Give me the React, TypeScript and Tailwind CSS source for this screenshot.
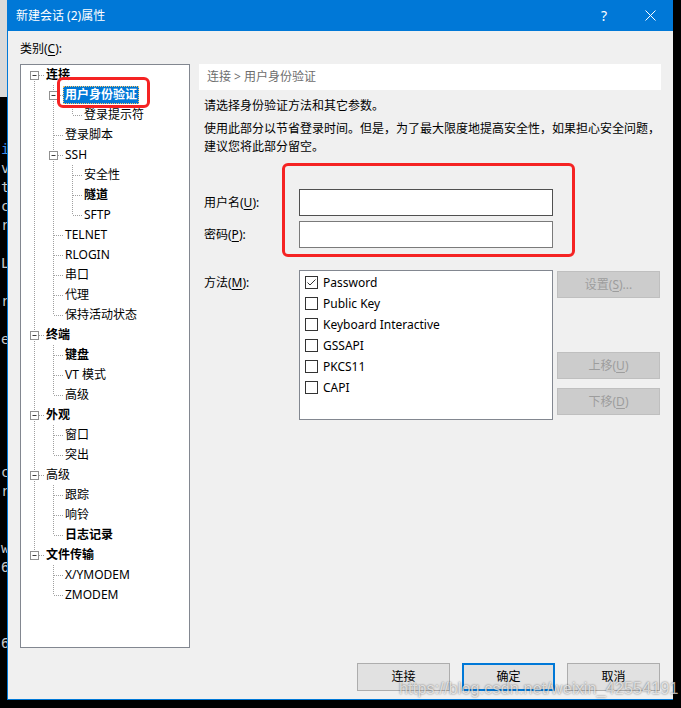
import React from 'react'

type TreeNode = { t: string; b?: boolean; sel?: boolean; c?: TreeNode[] }
type Row = { node: TreeNode; trail: boolean[]; last: boolean; first: boolean }

const tree: TreeNode[] = [
  {
    t: '连接',
    b: true,
    c: [
      { t: '用户身份验证', b: true, sel: true, c: [{ t: '登录提示符' }] },
      { t: '登录脚本' },
      { t: 'SSH', c: [{ t: '安全性' }, { t: '隧道', b: true }, { t: 'SFTP' }] },
      { t: 'TELNET' },
      { t: 'RLOGIN' },
      { t: '串口' },
      { t: '代理' },
      { t: '保持活动状态' },
    ],
  },
  { t: '终端', b: true, c: [{ t: '键盘', b: true }, { t: 'VT 模式' }, { t: '高级' }] },
  { t: '外观', b: true, c: [{ t: '窗口' }, { t: '突出' }] },
  { t: '高级', c: [{ t: '跟踪' }, { t: '响铃' }, { t: '日志记录', b: true }] },
  { t: '文件传输', b: true, c: [{ t: 'X/YMODEM' }, { t: 'ZMODEM' }] },
]

const flatten = (nodes: TreeNode[], trail: boolean[], out: Row[]) => {
  nodes.forEach((n, i) => {
    const last = i === nodes.length - 1
    out.push({ node: n, trail, last, first: trail.length === 0 && i === 0 })
    if (n.c) flatten(n.c, [...trail, !last], out)
  })
  return out
}

const rows = flatten(tree, [], [])

// left edge of the terminal window behind the dialog, one char per line
const termLines = [
  'i', 'v', 't', 'c', 'r', '', 'L', '', 'r', '', 'e', '', '', '', '', '', '', 'c', 'r', '', '', 'w', '6', '', '', '', '6',
]

const DOT = '#a0a0a0'

function Connector({ row }: { row: Row }) {
  return (
    <svg width="19" height="20" className="shrink-0">
      {!row.first && <line x1="9.5" y1="0" x2="9.5" y2="10" stroke={DOT} strokeDasharray="1 1" />}
      {!row.last && <line x1="9.5" y1="10" x2="9.5" y2="20" stroke={DOT} strokeDasharray="1 1" />}
      <line x1="10" y1="10.5" x2="19" y2="10.5" stroke={DOT} strokeDasharray="1 1" />
      {row.node.c && (
        <g>
          <rect x="5.5" y="6.5" width="8" height="8" fill="#fff" stroke="#919191" />
          <line x1="7.5" y1="10.5" x2="11.5" y2="10.5" stroke="#3c3c3c" />
        </g>
      )}
    </svg>
  )
}

function TreeRow({ row }: { row: Row }) {
  const { node } = row
  return (
    <div className="flex h-[20px] items-center">
      {row.trail.map((cont, i) => (
        <svg key={i} width="19" height="20" className="shrink-0">
          {cont && <line x1="9.5" y1="0" x2="9.5" y2="20" stroke={DOT} strokeDasharray="1 1" />}
        </svg>
      ))}
      <Connector row={row} />
      <span
        className={
          'whitespace-nowrap px-[2px] text-[12px] leading-[18px] ' +
          (node.b ? 'font-bold ' : '') +
          (node.sel ? 'bg-[#0078d7] text-white outline-1 outline-dotted outline-offset-[-1px] outline-[#f4c66b]' : 'text-black')
        }
      >
        {node.t}
      </span>
    </div>
  )
}

function Mn({ children }: { children: React.ReactNode }) {
  return <span className="underline underline-offset-2">{children}</span>
}

function Check({ on }: { on?: boolean }) {
  return (
    <svg width="13" height="13" className="shrink-0">
      <rect x="0.5" y="0.5" width="12" height="12" fill="#fff" stroke="#333" />
      {on && <polyline points="2.5,6.5 5,9 10.5,3.5" fill="none" stroke="#333" strokeWidth="1" />}
    </svg>
  )
}

function SideButton({ children }: { children: React.ReactNode }) {
  return (
    <div className="flex h-[27px] w-[103px] items-center justify-center border border-[#bfbfbf] bg-[#cccccc] text-[12px] text-[#9d9d9d]">
      {children}
    </div>
  )
}

function DialogButton({ children, primary }: { children: React.ReactNode; primary?: boolean }) {
  return (
    <div
      className={
        'flex h-[28px] w-[93px] items-center justify-center bg-[#e1e1e1] text-[12px] text-black ' +
        (primary ? 'border-2 border-[#0078d7]' : 'border border-[#adadad]')
      }
    >
      {children}
    </div>
  )
}

export default function App() {
  const methods = ['Password', 'Public Key', 'Keyboard Interactive', 'GSSAPI', 'PKCS11', 'CAPI']

  return (
    <div className="relative flex h-[708px] w-[681px] overflow-hidden bg-black font-['Noto_Sans','Noto_Sans_CJK_SC',sans-serif]">
      {/* window behind */}
      <div className="flex w-[7px] shrink-0 flex-col overflow-hidden">
        <div className="h-[97px] bg-[#dadada]" />
        <div className="flex flex-col pt-[43px] font-['DejaVu_Sans_Mono',monospace] text-[14px] leading-[19px] text-[#c8c8c8]">
          {termLines.map((c, i) => (
            <div key={i} className={'h-[19px] pl-[1px] ' + (i === 0 ? 'text-[#3b8eea]' : '')}>
              {c}
            </div>
          ))}
        </div>
      </div>

      {/* dialog */}
      <div className="flex h-[700px] w-[666px] shrink-0 flex-col border-b border-l border-[#0078d7] bg-[#f0f0f0]">
        <div className="flex h-[31px] shrink-0 items-center bg-[#0078d7] text-white">
          <span className="flex-1 pl-[8px] text-[12px]">新建会话 (2)属性</span>
          <div className="flex h-full w-[46px] items-center justify-center text-[14px]">?</div>
          <div className="flex h-full w-[46px] items-center justify-center">
            <svg width="11" height="11">
              <line x1="0.5" y1="0.5" x2="10.5" y2="10.5" stroke="#fff" />
              <line x1="10.5" y1="0.5" x2="0.5" y2="10.5" stroke="#fff" />
            </svg>
          </div>
        </div>

        <div className="flex flex-1 flex-col px-[12px]">
          <div className="mt-[9px] h-[18px] text-[12px] leading-[18px] text-black">
            类别(<Mn>C</Mn>):
          </div>

          <div className="mt-[6px] flex gap-[9px]">
            {/* category tree */}
            <div className="h-[584px] w-[170px] border border-[#828790] bg-white pl-[4px]">
              {rows.map((r, i) => (
                <TreeRow key={i} row={r} />
              ))}
            </div>

            {/* page */}
            <div className="flex w-[462px] flex-col text-[12px] text-black">
              <div className="flex h-[26px] items-center bg-white pl-[8px] text-[#6d6d6d]">连接 &gt; 用户身份验证</div>

              <div className="pl-[5px]">
                <p className="mt-[7px] leading-[18px]">请选择身份验证方法和其它参数。</p>
                <p className="mt-[5px] leading-[18px]">
                  使用此部分以节省登录时间。但是，为了最大限度地提高安全性，如果担心安全问题，
                  <br />
                  建议您将此部分留空。
                </p>

                <div className="mt-[33px] flex items-center">
                  <span className="w-[95px]">
                    用户名(<Mn>U</Mn>):
                  </span>
                  <div className="h-[27px] w-[254px] border border-[#505050] bg-white" />
                </div>
                <div className="mt-[5px] flex items-center">
                  <span className="w-[95px]">
                    密码(<Mn>P</Mn>):
                  </span>
                  <div className="h-[27px] w-[254px] border border-[#7a7a7a] bg-white" />
                </div>

                <div className="mt-[22px] flex">
                  <span className="w-[95px] pt-[4px] leading-[18px]">
                    方法(<Mn>M</Mn>):
                  </span>
                  <div className="h-[150px] w-[254px] border border-[#828790] bg-white pl-[5px] pt-[1px]">
                    {methods.map((m, i) => (
                      <div key={m} className="flex h-[21px] items-center gap-[5px]">
                        <Check on={i === 0} />
                        <span className="text-[12px]">{m}</span>
                      </div>
                    ))}
                  </div>
                  <div className="ml-[4px] flex flex-col pt-[1px]">
                    <SideButton>
                      设置(<Mn>S</Mn>)...
                    </SideButton>
                    <div className="mt-[54px]">
                      <SideButton>
                        上移(<Mn>U</Mn>)
                      </SideButton>
                    </div>
                    <div className="mt-[9px]">
                      <SideButton>
                        下移(<Mn>D</Mn>)
                      </SideButton>
                    </div>
                  </div>
                </div>
              </div>
            </div>
          </div>

          <div className="mt-[15px] flex justify-end gap-[12px] pr-[1px]">
            <DialogButton>连接</DialogButton>
            <DialogButton primary>确定</DialogButton>
            <DialogButton>取消</DialogButton>
          </div>
        </div>
      </div>

      {/* red annotation marks drawn over the screenshot */}
      <div className="pointer-events-none absolute left-[57px] top-[77px] h-[31px] w-[93px] rounded-[6px] border-[3px] border-[#f52323]" />
      <div className="pointer-events-none absolute left-[282px] top-[163px] h-[94px] w-[293px] rounded-[6px] border-[3px] border-[#f52323]" />

      {/* watermark */}
      <div className="pointer-events-none absolute left-[399px] top-[678px] font-['Liberation_Sans',Arial,sans-serif] text-[16px] leading-[22px] tracking-[0.2px] text-white/70 [text-shadow:0_0_2px_rgba(0,0,0,0.6)]">
        https://blog.csdn.net/weixin_42554191
      </div>
    </div>
  )
}
